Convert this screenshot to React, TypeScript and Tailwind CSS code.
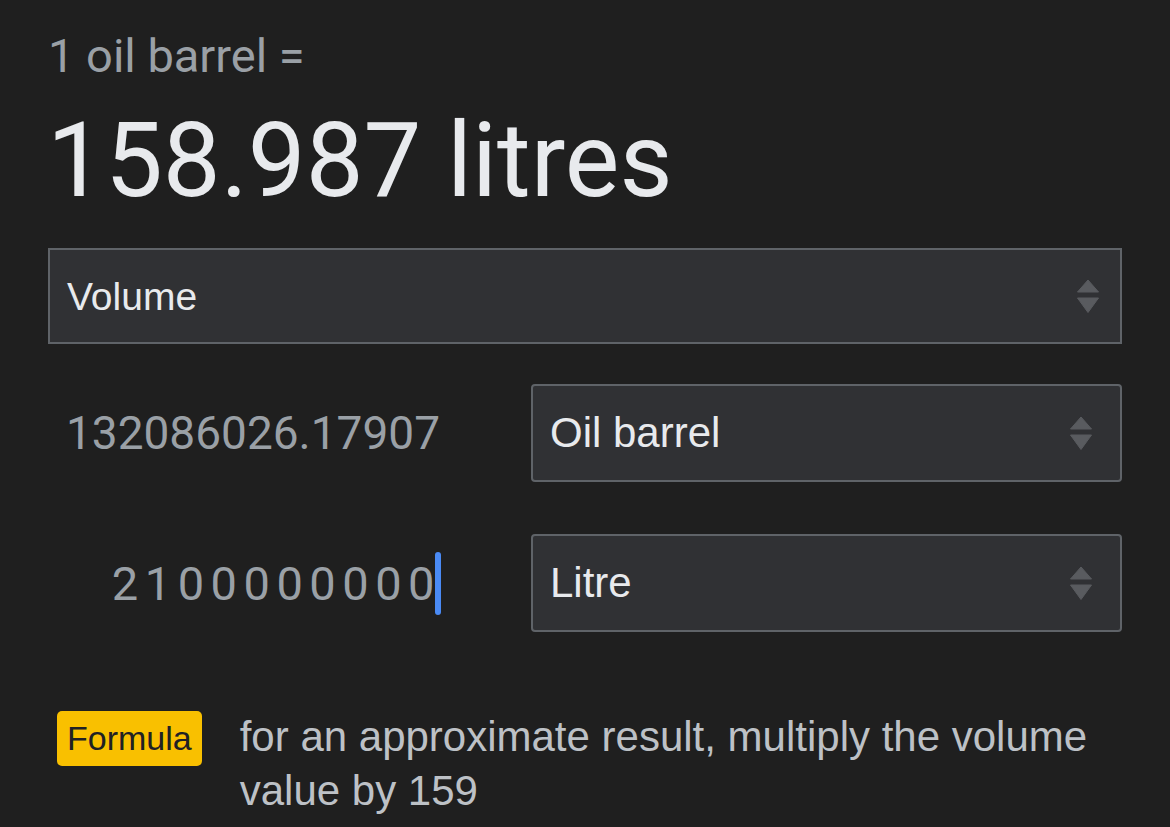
import React from "react";

function Arrows() {
  return (
    <svg width="22" height="35" viewBox="0 0 22 35" className="shrink-0">
      <path d="M11 1 L21.5 13 L0.5 13 Z" fill="#595b5f" stroke="#595b5f" strokeWidth="1" strokeLinejoin="round" />
      <path d="M0.5 19 L21.5 19 L11 33.5 Z" fill="#595b5f" stroke="#595b5f" strokeWidth="1" strokeLinejoin="round" />
    </svg>
  );
}

function Select({
  label,
  h,
  rounded,
  size,
  pr,
}: {
  label: string;
  h: string;
  rounded?: boolean;
  size: string;
  pr: string;
}) {
  return (
    <div
      className={`flex items-center justify-between border-2 border-[#5f6368] bg-[#303134] pl-[17px] ${pr} ${h} ${rounded ? "rounded-[4px]" : ""}`}
    >
      <span
        className={`text-[#e8eaed] ${size} leading-none`}
        style={{ fontFamily: '"Liberation Sans", Arial, sans-serif' }}
      >
        {label}
      </span>
      <Arrows />
    </div>
  );
}

export default function App() {
  const gs = { fontFamily: 'Roboto, "Open Sans", sans-serif' };
  const ar = { fontFamily: '"Liberation Sans", Arial, sans-serif' };
  return (
    <div className="w-[1170px] h-[827px] overflow-hidden bg-[#1f1f1f] pl-[48px] pr-[48px]">
      <div className="pt-[26px] text-[#9aa0a6] text-[47px] leading-[60px]" style={gs}>
        1 oil barrel =
      </div>
      <div className="mt-[15px] text-[#e8eaed] text-[103px] leading-[120px] -ml-[1px]" style={gs}>
        158.987 litres
      </div>
      <div className="mt-[27px]">
        <Select label="Volume" h="h-[96px]" size="text-[39px]" pr="pr-[21px]" />
      </div>
      <div className="mt-[40px] grid grid-cols-[483px_1fr] gap-y-[52px]">
        <div className="flex items-center justify-end pr-[91px] h-[98px]">
          <span className="text-[#9aa0a6] text-[46px] leading-none" style={gs}>
            132086026.17907
          </span>
        </div>
        <Select label="Oil barrel" h="h-[98px]" rounded size="text-[42px]" pr="pr-[28px]" />
        <div className="flex items-center justify-end pr-[90px] h-[98px]">
          <span className="text-[#9aa0a6] text-[47px] leading-none tracking-[6.5px] -mr-[6px]" style={gs}>
            2100000000
          </span>
          <span className="inline-block w-[6px] h-[63px] bg-[#4a8af4] rounded-[3px]" />
        </div>
        <Select label="Litre" h="h-[98px]" rounded size="text-[42px]" pr="pr-[28px]" />
      </div>
      <div className="mt-[79px] flex items-start pl-[9px]">
        <div
          className="bg-[#f9c000] text-[#202124] text-[34px] leading-[55px] h-[55px] px-[10px] rounded-[5px] shrink-0"
          style={ar}
        >
          Formula
        </div>
        <div className="ml-[38px] text-[#bdc1c6] text-[42px] leading-[54px] -mt-[1px]" style={ar}>
          for an approximate result, multiply the volume value by 159
        </div>
      </div>
    </div>
  );
}
